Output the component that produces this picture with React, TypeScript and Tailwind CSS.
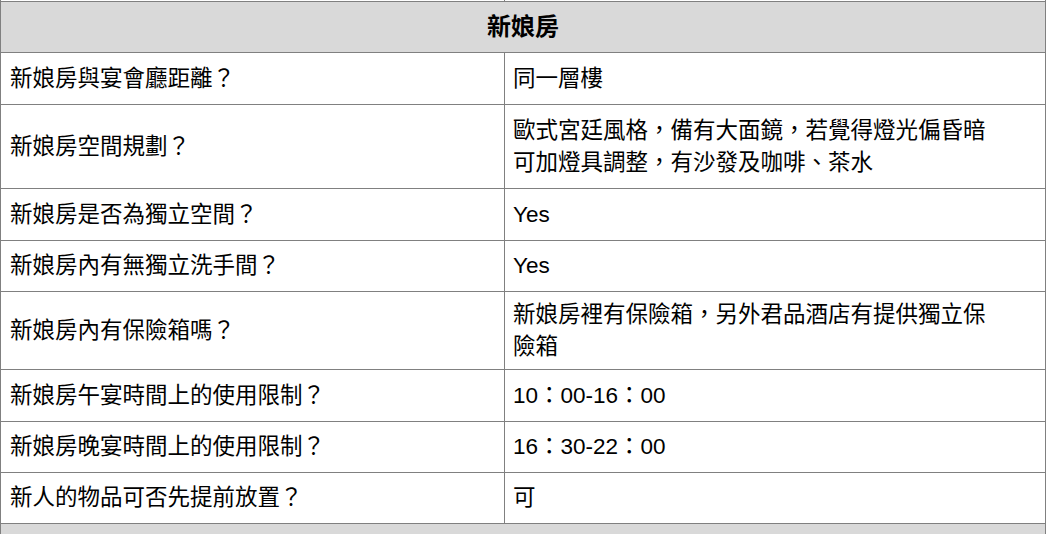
const rows: { q: string; a: string; h: string }[] = [
  { q: "新娘房與宴會廳距離？", a: "同一層樓", h: "h-[52px]" },
  { q: "新娘房空間規劃？", a: "歐式宮廷風格，備有大面鏡，若覺得燈光偏昏暗可加燈具調整，有沙發及咖啡、茶水", h: "h-[84px]" },
  { q: "新娘房是否為獨立空間？", a: "Yes", h: "h-[52px]" },
  { q: "新娘房內有無獨立洗手間？", a: "Yes", h: "h-[51px]" },
  { q: "新娘房內有保險箱嗎？", a: "新娘房裡有保險箱，另外君品酒店有提供獨立保險箱", h: "h-[78px]" },
  { q: "新娘房午宴時間上的使用限制？", a: "10：00-16：00", h: "h-[52px]" },
  { q: "新娘房晚宴時間上的使用限制？", a: "16：30-22：00", h: "h-[51px]" },
  { q: "新人的物品可否先提前放置？", a: "可", h: "h-[51px]" },
];

export default function App() {
  return (
    <div
      className="h-[534px] overflow-hidden bg-white text-black"
      style={{ fontFamily: '"Liberation Sans", "Noto Sans CJK TC", sans-serif' }}
    >
      <div className="flex h-px w-[1046px] border-x border-[#808080]">
        <div className="w-[504px] border-r border-[#808080]" />
      </div>
      <table className="w-[1046px] table-fixed border-collapse text-[22.5px] leading-[32px]">
        <colgroup>
          <col className="w-[504px]" />
          <col />
        </colgroup>
        <tbody>
          <tr className="h-[51px] bg-[#d9d9d9]">
            <th colSpan={2} className="border border-[#808080] text-center text-[24px] font-bold">
              新娘房
            </th>
          </tr>
          {rows.map((r) => (
            <tr key={r.q} className={r.h}>
              <td className="border border-[#808080] px-[9px] align-middle">{r.q}</td>
              <td className="border border-[#808080] pl-[8px] pr-[50px] align-middle">{r.a}</td>
            </tr>
          ))}
          <tr className="h-[51px] bg-[#d9d9d9]">
            <th colSpan={2} className="border border-[#808080]" />
          </tr>
        </tbody>
      </table>
    </div>
  );
}
